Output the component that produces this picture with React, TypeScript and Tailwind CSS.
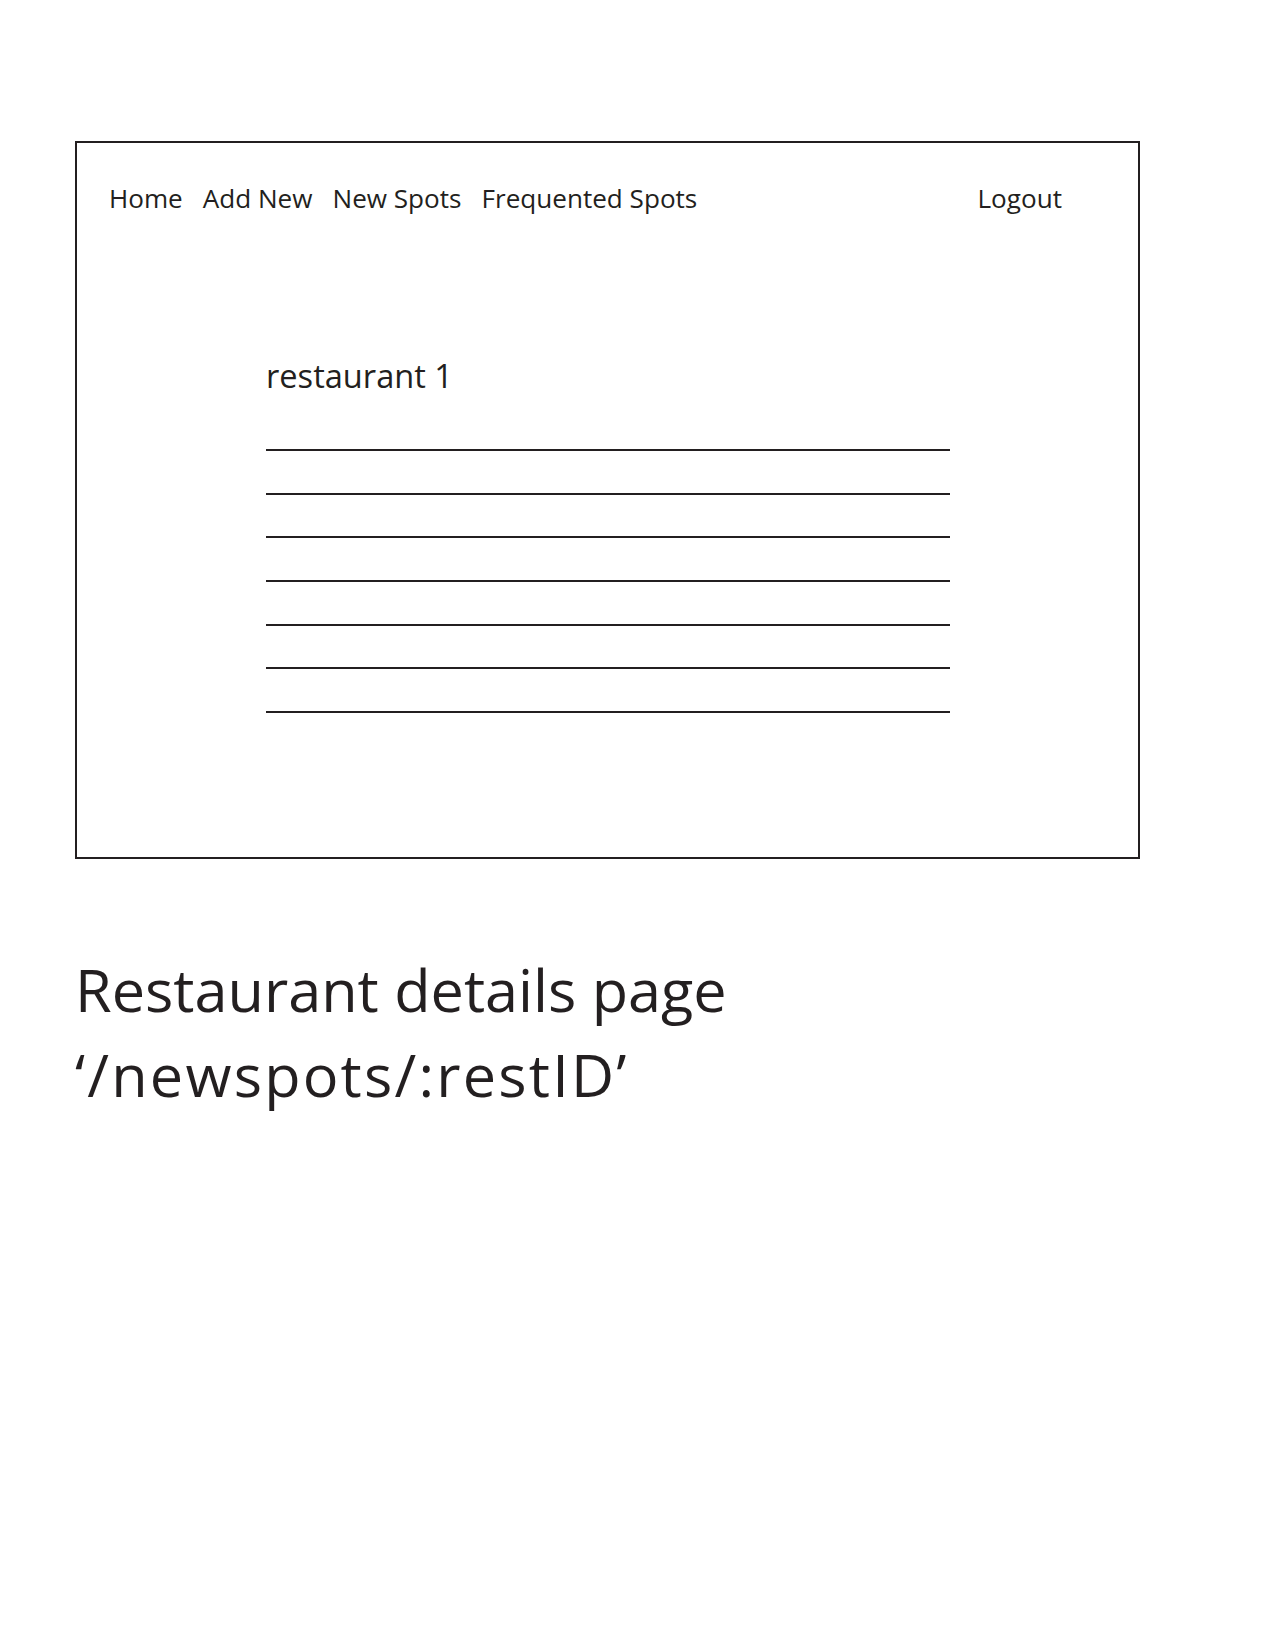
import React from "react";

export default function App() {
  const lines = [0, 1, 2, 3, 4, 5, 6];
  return (
    <div
      className="min-h-[1651px] w-[1275px] bg-white pl-[75px] pt-[141px] text-[#231f20]"
      style={{ fontFamily: '"Open Sans", "Noto Sans", sans-serif' }}
    >
      <div className="flex h-[718px] w-[1065px] flex-col border-2 border-[#231f20]">
        <nav className="flex items-center justify-between pl-[32px] pr-[76px] pt-[39px] text-[26.1px] leading-[32px]">
          <div className="flex gap-[20px]">
            <span>Home</span>
            <span>Add New</span>
            <span>New Spots</span>
            <span>Frequented Spots</span>
          </div>
          <span>Logout</span>
        </nav>
        <div className="ml-[189px] mt-[142px] flex w-[684px] flex-col">
          <h1 className="text-[32.6px] leading-[40px]">restaurant 1</h1>
          <div className="mt-[53px] flex flex-col gap-[41.67px]">
            {lines.map((i) => (
              <div key={i} className="h-[2px] w-full bg-[#231f20]" />
            ))}
          </div>
        </div>
      </div>
      <div className="mt-[88px] text-[59.4px] leading-[85px]">
        <p>Restaurant details page</p>
        <p className="tracking-[2.2px]">‘/newspots/:restID’</p>
      </div>
    </div>
  );
}
